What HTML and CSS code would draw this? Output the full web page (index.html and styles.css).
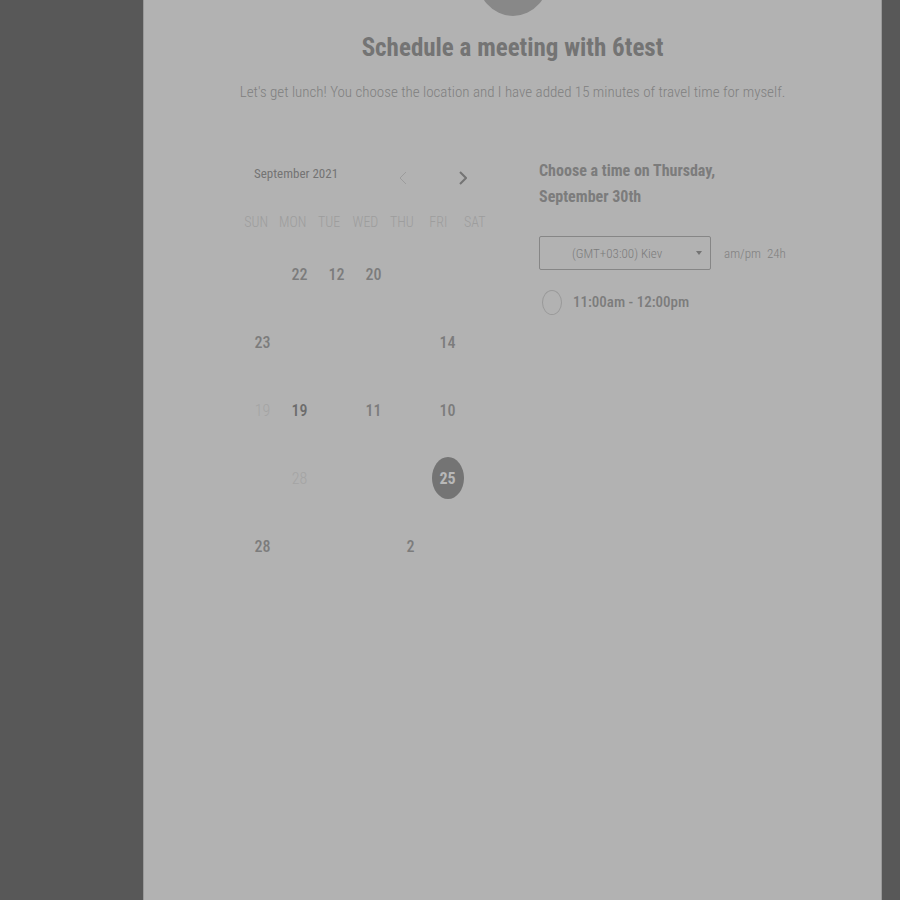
FILE: index.html
```
<!DOCTYPE html>
<html lang="en">
<head>
<meta charset="utf-8">
<meta name="viewport" content="width=device-width, initial-scale=1">
<title>Schedule a meeting</title>
<link rel="stylesheet" href="styles.css">
</head>
<body>
<main class="panel">
  <header class="intro">
    <div class="avatar"></div>
    <h1>Schedule a meeting with 6test</h1>
    <p>Let's get lunch! You choose the location and I have added 15 minutes of travel time for myself.</p>
  </header>
  <div class="booking">
    <section class="calendar">
      <div class="month-bar">
        <h2>September 2021</h2>
        <button class="arrow faint" aria-label="Previous month"><svg viewBox="0 0 8 14"><path d="M7 1 1 7l6 6"/></svg></button>
        <button class="arrow" aria-label="Next month"><svg viewBox="0 0 8 14"><path d="m1 1 6 6-6 6"/></svg></button>
      </div>
      <table>
        <thead><tr><th>SUN</th><th>MON</th><th>TUE</th><th>WED</th><th>THU</th><th>FRI</th><th>SAT</th></tr></thead>
        <tbody>
          <tr><td></td><td>22</td><td>12</td><td>20</td><td></td><td></td><td></td></tr>
          <tr><td>23</td><td></td><td></td><td></td><td></td><td>14</td><td></td></tr>
          <tr><td class="past">19</td><td class="dark">19</td><td></td><td>11</td><td></td><td>10</td><td></td></tr>
          <tr><td></td><td class="past">28</td><td></td><td></td><td></td><td><button class="selected">25</button></td><td></td></tr>
          <tr><td>28</td><td></td><td></td><td></td><td>2</td><td></td><td></td></tr>
        </tbody>
      </table>
    </section>
    <section class="times">
      <h2>Choose a time on Thursday, September 30th</h2>
      <div class="zone-row">
        <div class="zone">
          <select aria-label="Time zone"><option>(GMT+03:00) Kiev</option></select>
          <svg class="caret" viewBox="0 0 6 4"><path d="M0 0h6L3 4z"/></svg>
        </div>
        <div class="format"><span>am/pm</span><span>24h</span></div>
      </div>
      <label class="slot"><input type="radio" name="slot"><span>11:00am - 12:00pm</span></label>
    </section>
  </div>
</main>
</body>
</html>
```
FILE: styles.css
```
* { box-sizing: border-box; }
body {
  margin: 0;
  padding: 0 18px 0 143px;
  background: #585858;
  color: #7c7c7c;
  font-family: "Roboto Condensed", Roboto, sans-serif;
  font-size: 16px;
}
h1, h2, p { margin: 0; }
button, select, input { font: inherit; color: inherit; margin: 0; }
button { padding: 0; border: 0; background: none; }

.panel {
  min-height: 100vh;
  background: #b2b2b2;
  border: solid #999;
  border-width: 0 1px;
}
.intro {
  display: flex;
  flex-direction: column;
  align-items: center;
  text-align: center;
}
.avatar {
  width: 74px;
  height: 84px;
  margin-top: -68px;
  border-radius: 50%;
  background: #888;
}
h1 {
  margin-top: 16px;
  color: #747474;
  font-size: 25px;
  line-height: 32px;
}
.intro p {
  margin-top: 16px;
  color: #808080;
  font-size: 15px;
  font-weight: 300;
  line-height: 24px;
}
.booking {
  display: grid;
  grid-template-columns: 259px 242px;
  justify-content: center;
  gap: 36px;
  margin-top: 54px;
}
.month-bar {
  display: flex;
  align-items: center;
  height: 40px;
  padding: 0 10px;
}
.month-bar h2 {
  flex: 1;
  align-self: start;
  color: #747474;
  font-size: 13px;
  font-weight: 400;
  line-height: 32px;
}
.arrow {
  width: 60px;
  height: 24px;
}
.arrow svg {
  display: block;
  width: 8px;
  height: 14px;
  margin: 0 auto;
  fill: none;
  stroke: #747474;
  stroke-width: 2;
}
.arrow.faint svg {
  stroke: #9c9c9c;
  stroke-width: 1;
}
table, thead, tbody { display: block; }
tr {
  display: grid;
  grid-template-columns: repeat(7, 1fr);
  align-items: center;
  text-align: center;
}
thead tr {
  height: 36px;
  margin: 6px 10px 0 -6px;
}
th {
  padding: 0;
  color: #9d9d9d;
  font-size: 14px;
  font-weight: 300;
}
tbody tr { height: 68px; }
td {
  padding: 0;
  font-weight: 500;
}
td.past {
  color: #a4a4a4;
  font-weight: 300;
}
td.dark { color: #6c6c6c; }
.selected {
  width: 32px;
  height: 42px;
  border-radius: 50%;
  background: #747474;
  color: #b8b8b8;
  font-weight: 700;
}
.times h2 {
  max-width: 200px;
  font-size: 16px;
  line-height: 26px;
}
.zone-row {
  display: flex;
  align-items: center;
  gap: 13px;
  margin-top: 26px;
}
.zone {
  position: relative;
  flex: none;
  width: 172px;
}
.zone select {
  appearance: none;
  width: 100%;
  height: 34px;
  padding: 0 32px;
  border: 1px solid #868686;
  border-radius: 2px;
  background: transparent;
  font-size: 13px;
  font-weight: 300;
}
.caret {
  position: absolute;
  top: 15px;
  right: 9px;
  width: 6px;
  height: 4px;
  fill: #747474;
}
.format {
  display: flex;
  gap: 6px;
  color: #808080;
  font-size: 13px;
  font-weight: 300;
}
.slot {
  display: flex;
  align-items: center;
  gap: 11px;
  margin: 19px 0 0 3px;
  font-size: 15px;
  font-weight: 500;
  line-height: 26px;
}
.slot input {
  appearance: none;
  width: 20px;
  height: 25px;
  border: 1px solid #999;
  border-radius: 50%;
}
```
